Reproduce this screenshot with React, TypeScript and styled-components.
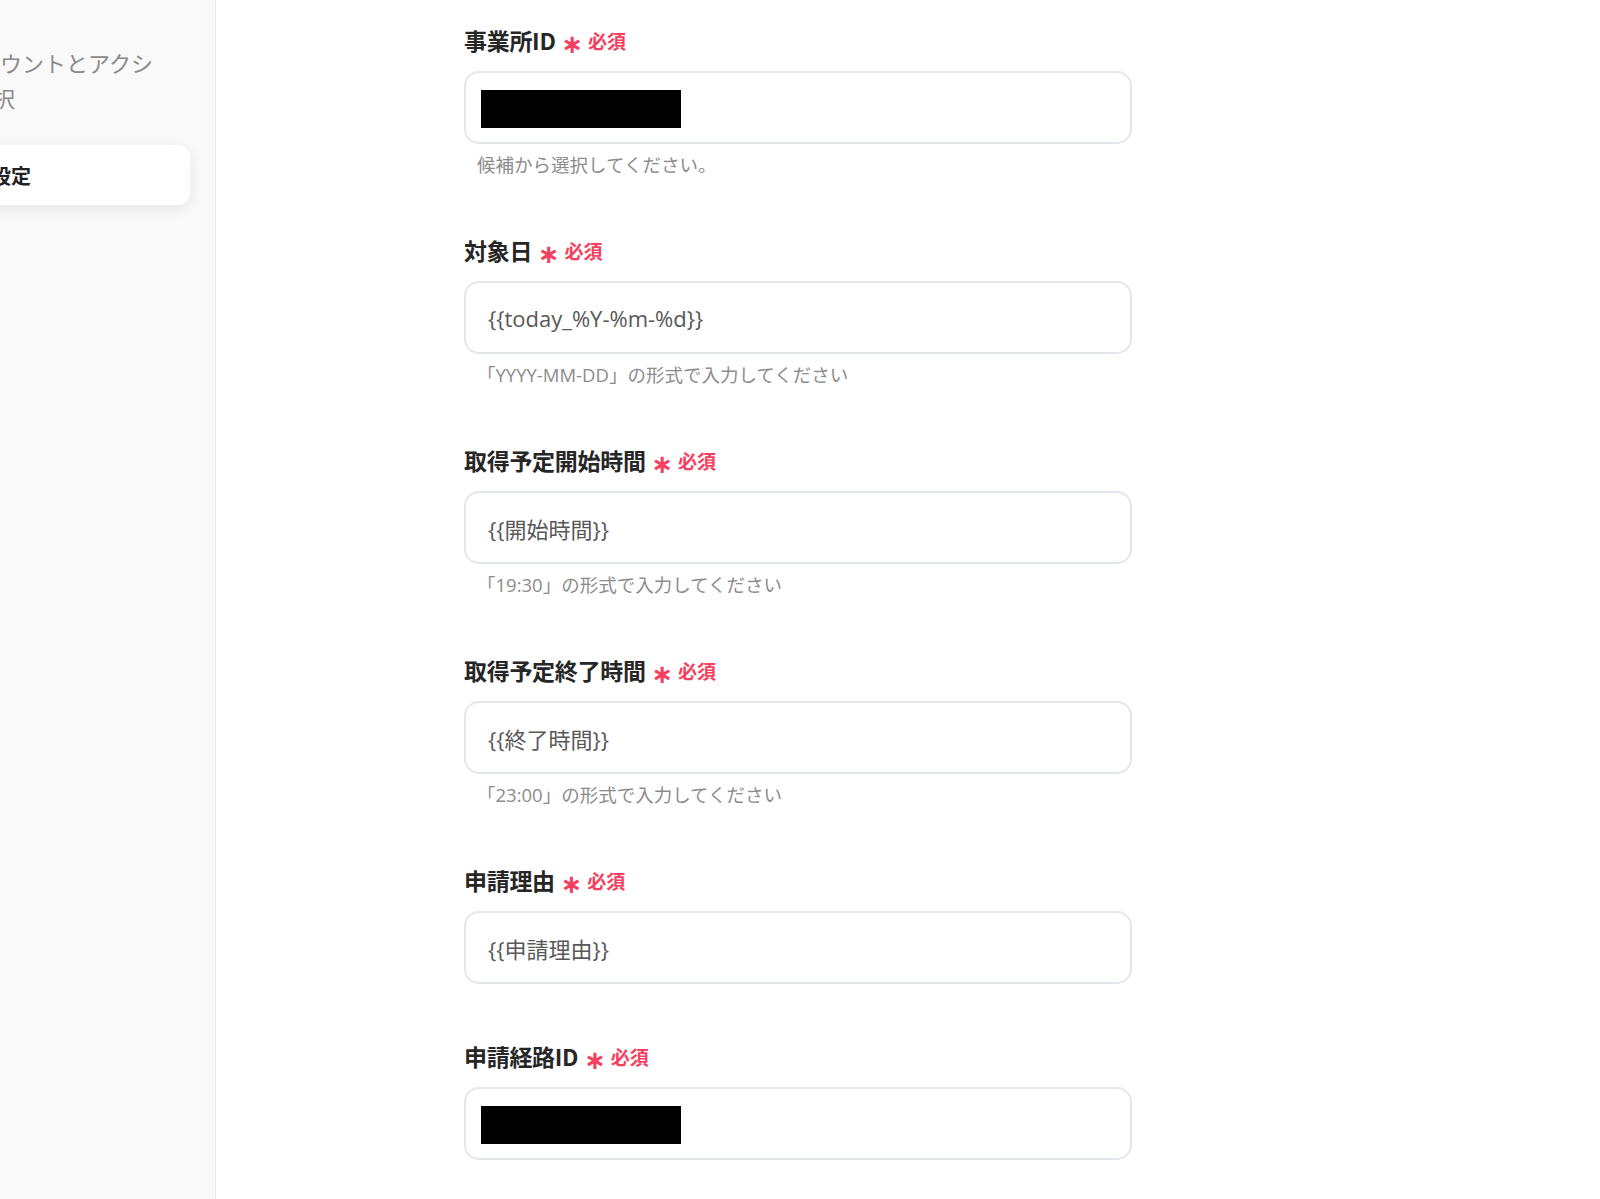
import React from "react";
import styled, { createGlobalStyle } from "styled-components";

const GlobalStyle = createGlobalStyle`
  html, body {
    margin: 0;
    padding: 0;
    background: #ffffff;
  }
  body {
    font-family: "Noto Sans CJK JP", "Noto Sans", sans-serif;
  }
  * { box-sizing: border-box; }
`;

const Page = styled.div`
  display: flex;
  width: 1600px;
  height: 1199px;
  overflow: hidden;
  background: #ffffff;
`;

const Sidebar = styled.aside`
  flex: 0 0 216px;
  width: 216px;
  height: 100%;
  background: #f9f9f9;
  border-right: 1px solid #ececec;
  overflow: hidden;
  padding-top: 45px;
`;

const SidebarInner = styled.div`
  margin-left: -120px;
  width: 310px;
  display: flex;
  flex-direction: column;
`;

const StepLine = styled.div<{ $indent: number }>`
  padding-left: ${(p) => p.$indent}px;
  font-size: 22px;
  line-height: 35px;
  color: #8a8a8a;
  white-space: nowrap;
`;

const StepCard = styled.div`
  margin-top: 30px;
  height: 60px;
  background: #ffffff;
  border-radius: 12px;
  box-shadow: 0 4px 14px rgba(0, 0, 0, 0.08);
  display: flex;
  align-items: center;
  padding-left: 51px;
  font-size: 20px;
  font-weight: 700;
  color: #222222;
  white-space: nowrap;
`;

const Main = styled.main`
  flex: 1;
  padding: 24px 0 0 248px;
`;

const Form = styled.div`
  width: 668px;
  display: flex;
  flex-direction: column;
  gap: 56px;
`;

const Field = styled.div`
  display: flex;
  flex-direction: column;
`;

const Label = styled.div`
  display: flex;
  align-items: center;
  height: 32px;
  margin-bottom: 15px;
  font-size: 23px;
  line-height: 32px;
  font-weight: 700;
  color: #262626;
  letter-spacing: -0.3px;
`;

const Asterisk = styled.span`
  margin-left: 6px;
  margin-top: 7px;
  font-size: 26px;
  line-height: 26px;
  font-weight: 700;
  color: #f5405f;
  font-family: "DejaVu Sans", sans-serif;
`;

const Required = styled.span`
  margin-left: 5px;
  margin-top: 2px;
  font-size: 19px;
  font-weight: 700;
  color: #f5405f;
  letter-spacing: 0;
`;

const InputBox = styled.div`
  height: 73px;
  border: 2px solid #e3e6eb;
  border-radius: 15px;
  background: #ffffff;
  display: flex;
  align-items: center;
  padding-left: 22px;
  font-family: "Open Sans", "Noto Sans CJK JP", sans-serif;
  font-size: 22px;
  color: #585858;
`;

const Redacted = styled.div`
  width: 200px;
  height: 38px;
  margin-left: -7px;
  margin-top: 2px;
  background: #000000;
`;

const Hint = styled.div`
  margin-top: 8px;
  padding-left: 13px;
  font-family: "Open Sans", "Noto Sans CJK JP", sans-serif;
  font-size: 18.5px;
  line-height: 26px;
  color: #8c8c8c;
`;

type FieldDef = {
  label: string;
  value?: string;
  redacted?: boolean;
  hint?: string;
};

const fields: FieldDef[] = [
  { label: "事業所ID", redacted: true, hint: "候補から選択してください。" },
  { label: "対象日", value: "{{today_%Y-%m-%d}}", hint: "「YYYY-MM-DD」の形式で入力してください" },
  { label: "取得予定開始時間", value: "{{開始時間}}", hint: "「19:30」の形式で入力してください" },
  { label: "取得予定終了時間", value: "{{終了時間}}", hint: "「23:00」の形式で入力してください" },
  { label: "申請理由", value: "{{申請理由}}" },
  { label: "申請経路ID", redacted: true },
];

export default function App() {
  return (
    <>
      <GlobalStyle />
      <Page>
        <Sidebar>
          <SidebarInner>
            <StepLine $indent={76}>アカウントとアクシ</StepLine>
            <StepLine $indent={25}>ョンを選択</StepLine>
            <StepCard>詳細を設定</StepCard>
          </SidebarInner>
        </Sidebar>
        <Main>
          <Form>
            {fields.map((f) => (
              <Field key={f.label}>
                <Label>
                  {f.label}
                  <Asterisk>∗</Asterisk>
                  <Required>必須</Required>
                </Label>
                <InputBox>{f.redacted ? <Redacted /> : f.value}</InputBox>
                {f.hint && <Hint>{f.hint}</Hint>}
              </Field>
            ))}
          </Form>
        </Main>
      </Page>
    </>
  );
}
